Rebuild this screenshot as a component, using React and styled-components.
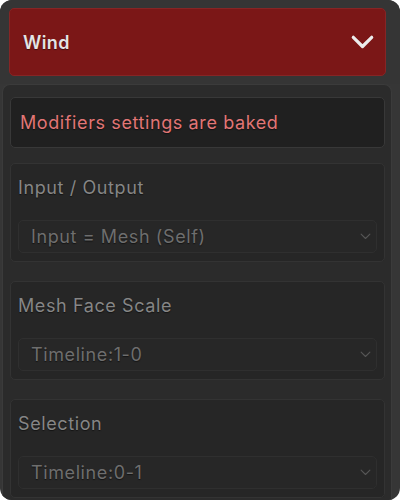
import React from 'react';
import styled, { createGlobalStyle } from 'styled-components';

const GlobalStyle = createGlobalStyle`
    body {
        margin: 0;
        background: #ffffff;
        font-family: Inter, "Noto Sans", sans-serif;
    }
`

const sections = [
    { label: 'Input / Output', value: 'Input = Mesh (Self)' },
    { label: 'Mesh Face Scale', value: 'Timeline:1-0' },
    { label: 'Selection', value: 'Timeline:0-1' },
]

function Chevron({ size, color, weight }) {
    return (
        <svg width={size} height={size * 0.6} viewBox="0 0 20 12" fill="none">
            <path d="M2 2 L10 10 L18 2" stroke={color} strokeWidth={weight} strokeLinecap="round" strokeLinejoin="round" />
        </svg>
    )
}

function App() {
    return (
        <>
            <GlobalStyle />
            <Frame>
                <Header>
                    <TitleBar>
                        <Title>Wind</Title>
                        <Chevron size={23} color="#ececec" weight={2.8} />
                    </TitleBar>
                </Header>
                <Body>
                    <Notice>Modifiers settings are baked</Notice>
                    {sections.map((s) => (
                        <Card key={s.label}>
                            <Label>{s.label}</Label>
                            <Select>
                                <span>{s.value}</span>
                                <Chevron size={11} color="#555555" weight={2} />
                            </Select>
                        </Card>
                    ))}
                </Body>
            </Frame>
        </>
    )
}

const Frame = styled.div`
    width: 400px;
    height: 500px;
    border-radius: 12px;
    background: #363636;
    overflow: hidden;
    display: flex;
    flex-direction: column;
`

const Header = styled.header`
    padding: 8px 14px 8px 9px;
    background: #353535;
`

const TitleBar = styled.div`
    height: 68px;
    box-sizing: border-box;
    background: #7b1717;
    border: 1px solid #862525;
    border-radius: 5px;
    display: flex;
    align-items: center;
    justify-content: space-between;
    padding: 0 11px 0 13px;
`

const Title = styled.span`
    color: #e4e4e4;
    font-size: 18px;
    font-weight: 600;
    letter-spacing: 0.4px;
    text-shadow: 0 1px 1px rgba(0, 0, 0, 0.45);
`

const Body = styled.section`
    flex: 1;
    margin: 0 8px 0 2px;
    padding: 12px 6px 0 7px;
    background: #2b2b2b;
    border: 1px solid #3b3b3b;
    border-bottom: none;
    border-radius: 8px 8px 0 0;
    display: flex;
    flex-direction: column;
    gap: 15px;
    overflow: hidden;
`

const Notice = styled.div`
    flex: none;
    height: 51px;
    box-sizing: border-box;
    display: flex;
    align-items: center;
    padding: 0 9px;
    background: #202020;
    border: 1px solid #383838;
    border-radius: 5px;
    color: #e27676;
    font-size: 18px;
    letter-spacing: 0.6px;
    text-shadow: 0 1px 1px rgba(0, 0, 0, 0.5);
`

const Card = styled.div`
    flex: none;
    box-sizing: border-box;
    height: 99px;
    padding: 12px 7px 8px;
    background: #262626;
    border: 1px solid #333333;
    border-radius: 5px;
    & + & {
        margin-top: 4px;
    }
`

const Label = styled.div`
    height: 24px;
    line-height: 24px;
    margin-bottom: 20px;
    color: #868686;
    font-size: 18px;
    letter-spacing: 0.6px;
    text-shadow: 0 1px 1px rgba(0, 0, 0, 0.5);
`

const Select = styled.div`
    height: 33px;
    box-sizing: border-box;
    display: flex;
    align-items: center;
    justify-content: space-between;
    padding: 0 5px 0 12px;
    background: #272727;
    border: 1px solid #2f2f2f;
    border-radius: 5px;
    color: #6e6e6e;
    font-size: 18px;
    letter-spacing: 0.6px;
    text-shadow: 0 1px 1px rgba(0, 0, 0, 0.5);
`

export default App;
